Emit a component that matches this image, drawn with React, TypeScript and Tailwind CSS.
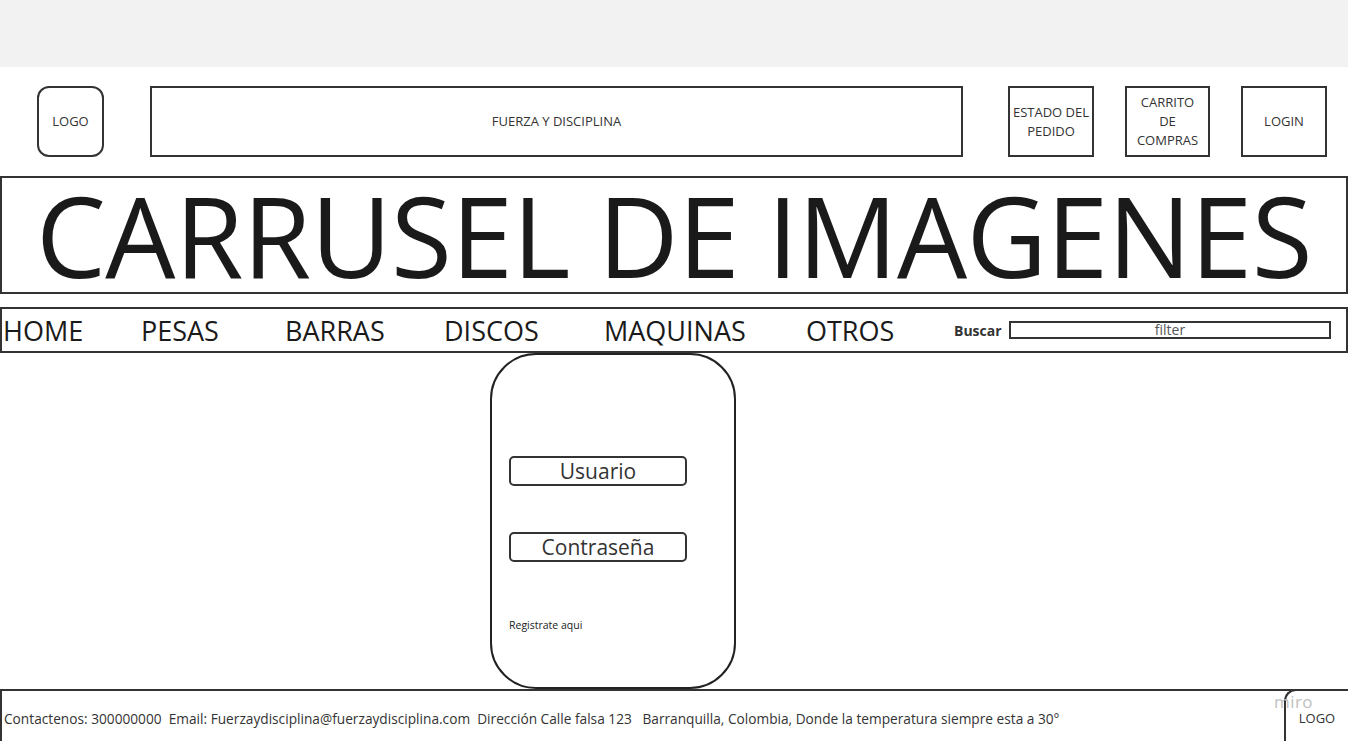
import React from "react";

const font = { fontFamily: '"Open Sans", "Noto Sans", sans-serif' };

export default function App() {
  return (
    <div className="w-[1348px] h-[741px] overflow-hidden bg-white text-[#222] flex flex-col relative" style={font}>
      {/* top gray bar */}
      <div className="h-[67px] bg-[#f2f2f2] shrink-0" />

      {/* header */}
      <div className="flex items-stretch h-[71px] mt-[19px] shrink-0">
        <div className="ml-[37px] w-[67px] border-2 border-[#333] rounded-[12px] flex items-center justify-center text-[13px] text-[#333]">
          LOGO
        </div>
        <div className="ml-[46px] w-[813px] border-2 border-[#333] flex items-center justify-center text-[13px] text-[#333]">
          FUERZA Y DISCIPLINA
        </div>
        <div className="ml-[45px] w-[86px] border-2 border-[#333] flex items-center justify-center text-center text-[13px] leading-[19px] text-[#333]">
          ESTADO DEL<br />PEDIDO
        </div>
        <div className="ml-[31px] w-[85px] border-2 border-[#333] flex items-center justify-center text-center text-[13px] leading-[19px] text-[#333]">
          CARRITO<br />DE<br />COMPRAS
        </div>
        <div className="ml-[31px] w-[86px] border-2 border-[#333] flex items-center justify-center text-[13px] text-[#333]">
          LOGIN
        </div>
      </div>

      {/* carousel */}
      <div className="mt-[19px] h-[118px] w-[1348px] border-2 border-[#333] flex items-center justify-center shrink-0">
        <span className="text-[111px] tracking-[-0.6px] leading-none text-[#1a1a1a] whitespace-nowrap">CARRUSEL DE IMAGENES</span>
      </div>

      {/* nav */}
      <div className="mt-[13px] h-[46px] w-[1348px] border-2 border-[#333] flex items-center shrink-0 text-[27px] text-[#1a1a1a]">
        <span className="ml-[1px] w-[138px] leading-none">HOME</span>
        <span className="w-[144px] leading-none">PESAS</span>
        <span className="w-[159px] leading-none">BARRAS</span>
        <span className="w-[160px] leading-none">DISCOS</span>
        <span className="w-[202px] leading-none">MAQUINAS</span>
        <span className="w-[148px] leading-none">OTROS</span>
        <span className="w-[55px] text-[14px] font-bold text-[#333] self-start mt-[11px]">Buscar</span>
        <div className="w-[322px] h-[18px] border-2 border-[#333] flex items-center justify-center text-[14px] text-[#555] leading-none self-start mt-[12px]">
          filter
        </div>
      </div>

      {/* main */}
      <div className="flex-1 flex">
        <div className="ml-[490px] w-[246px] h-[336px] border-2 border-[#222] rounded-[46px] flex flex-col px-[17px]">
          <div className="mt-[101px] w-[178px] h-[30px] border-2 border-[#333] rounded-[5px] flex items-center justify-center text-[21px] text-[#333] leading-none">
            Usuario
          </div>
          <div className="mt-[46px] w-[178px] h-[30px] border-2 border-[#333] rounded-[5px] flex items-center justify-center text-[21px] text-[#333] leading-none">
            Contraseña
          </div>
          <div className="mt-[58px] text-[10.5px] text-[#222] leading-none">Registrate aqui</div>
        </div>
      </div>

      {/* footer */}
      <div className="h-[52px] shrink-0 flex border-t-2 border-l-2 border-[#333]">
        <div className="flex-1 flex items-center pl-[2px] pt-[6px] text-[13.7px] text-[#333] whitespace-pre">
          {"Contactenos: 300000000  Email: Fuerzaydisciplina@fuerzaydisciplina.com  Dirección Calle falsa 123   Barranquilla, Colombia, Donde la temperatura siempre esta a 30°"}
        </div>
        <div className="w-[64px] -mt-[2px] border-2 border-r-0 border-b-0 border-[#333] rounded-tl-[12px] flex items-center justify-center text-[13px] text-[#333] pt-[6px]">
          LOGO
        </div>
      </div>

      {/* miro watermark */}
      <div className="absolute left-[1274px] top-[695px] text-[17px] text-[#c0c0c0] leading-[14px] tracking-wide">miro</div>
    </div>
  );
}
